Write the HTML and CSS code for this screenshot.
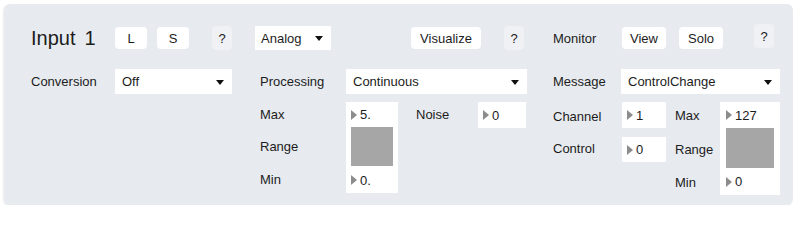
FILE: index.html
```html
<!DOCTYPE html>
<html>
<head>
<meta charset="utf-8">
<link rel="stylesheet" href="styles.css">
</head>
<body>
<div class="panel">
  <div class="col col1">
    <div class="top">
      <div class="title"><span>Input</span><span class="num">1</span></div>
      <div class="btn b-l">L</div>
      <div class="btn b-s">S</div>
      <div class="btn help h1">?</div>
    </div>
    <div class="row2">
      <div class="lbl w84">Conversion</div>
      <div class="dd dd-conv">Off<span class="caret"></span></div>
    </div>
  </div>

  <div class="col col2">
    <div class="top">
      <div class="dd dd-analog">Analog<span class="caret"></span></div>
      <div class="btn b-vis">Visualize</div>
      <div class="btn help h2">?</div>
    </div>
    <div class="row2 ind5">
      <div class="lbl w86">Processing</div>
      <div class="dd dd-proc">Continuous<span class="caret"></span></div>
    </div>
    <div class="lower ind5">
      <div class="labels l-mid">
        <div class="lab la1">Max</div>
        <div class="lab la2">Range</div>
        <div class="lab la3">Min</div>
      </div>
      <div class="range r-mid">
        <div class="nval"><span class="tri"></span>5.</div>
        <div class="sq"></div>
        <div class="nval"><span class="tri"></span>0.</div>
      </div>
      <div class="lab noise-l">Noise</div>
      <div class="nbox noise-b"><span class="tri"></span>0</div>
    </div>
  </div>

  <div class="col col3">
    <div class="top">
      <div class="lbl w69">Monitor</div>
      <div class="btn b-view">View</div>
      <div class="btn b-solo">Solo</div>
      <div class="btn help h3">?</div>
    </div>
    <div class="row2">
      <div class="lbl w68">Message</div>
      <div class="dd dd-msg">ControlChange<span class="caret"></span></div>
    </div>
    <div class="lower">
      <div class="cc-labels">
        <div class="lab cl1">Channel</div>
        <div class="lab cl2">Control</div>
      </div>
      <div class="cc-boxes">
        <div class="nbox cb"><span class="tri"></span>1</div>
        <div class="nbox cb cb2"><span class="tri"></span>0</div>
      </div>
      <div class="labels l-right">
        <div class="lab lb1">Max</div>
        <div class="lab lb2">Range</div>
        <div class="lab lb3">Min</div>
      </div>
      <div class="range r-right">
        <div class="nval"><span class="tri"></span>127</div>
        <div class="sq"></div>
        <div class="nval"><span class="tri"></span>0</div>
      </div>
    </div>
  </div>
</div>
</body>
</html>
```

FILE: styles.css
```css
html, body {
  margin: 0;
  padding: 0;
  background: #ffffff;
}
body {
  font-family: "Liberation Sans", Arial, sans-serif;
  font-size: 13px;
  color: #1c1c1c;
}
.panel {
  margin: 4px 0 0 4px;
  width: 789px;
  height: 201px;
  box-sizing: border-box;
  padding: 22px 13px 0 27px;
  background: #e7ebef;
  border-radius: 6px;
  box-shadow: -1px 1px 2px rgba(0,0,0,0.08);
  display: flex;
}
.col {
  display: flex;
  flex-direction: column;
}
.col1 { width: 201px; margin-right: 23px; }
.col2 { width: 272px; margin-right: 26px; }
.col3 { width: 227px; }

.top {
  height: 24px;
  display: flex;
  align-items: center;
}
.title {
  font-size: 20px;
  width: 84px;
  display: flex;
  align-items: center;
  line-height: 24px;
}
.title .num { margin-left: 9px; }

.btn {
  height: 22px;
  box-sizing: border-box;
  background: #ffffff;
  border-radius: 4px;
  display: flex;
  align-items: center;
  justify-content: center;
  font-size: 13px;
}
.help {
  width: 20px;
  height: 24px;
  background: #eff1f4;
}
.b-l { width: 32px; }
.b-s { width: 32px; margin-left: 10px; }
.h1 { margin-left: 23px; }
.b-vis { width: 70px; margin-left: 80px; }
.h2 { margin-left: 23px; }
.b-view { width: 44px; }
.b-solo { width: 44px; margin-left: 13px; }
.h3 { margin-left: 31px; align-self: flex-start; margin-top: -2px; }

.lbl { flex: none; }
.w84 { width: 84px; }
.w86 { width: 86px; }
.w69 { width: 69px; }
.w68 { width: 68px; }

.row2 {
  margin-top: 19px;
  height: 25px;
  display: flex;
  align-items: center;
}
.ind5 { padding-left: 5px; }

.dd {
  position: relative;
  height: 25px;
  box-sizing: border-box;
  background: #ffffff;
  padding-left: 7px;
  display: flex;
  align-items: center;
  font-size: 13px;
}
.dd-conv { width: 117px; }
.dd-proc { width: 181px; }
.dd-msg { width: 159px; }
.dd-analog { width: 76px; height: 24px; padding-left: 6px; }
.caret {
  position: absolute;
  right: 8px;
  top: 50%;
  margin-top: -2px;
  width: 0;
  height: 0;
  border-left: 4.5px solid transparent;
  border-right: 4.5px solid transparent;
  border-top: 5px solid #111;
}

.lower {
  margin-top: 8px;
  display: flex;
  align-items: flex-start;
}
.labels {
  display: flex;
  flex-direction: column;
}
.lab {
  display: flex;
  align-items: center;
}
.l-mid { width: 86px; }
.la1 { height: 24px; }
.la2 { height: 40px; }
.la3 { height: 27px; }

.range {
  background: #ffffff;
  display: flex;
  flex-direction: column;
  box-sizing: border-box;
}
.r-mid { width: 52px; height: 91px; padding: 0 5px; }
.r-right { width: 60px; height: 93px; padding: 0 6px; }
.nval {
  display: flex;
  align-items: center;
  height: 25px;
}
.r-mid .nval:last-child { height: 26px; }
.r-right .nval:first-child { height: 26px; }
.r-right .nval:last-child { height: 27px; }
.sq {
  background: #a6a6a6;
  flex: none;
}
.r-mid .sq { height: 39px; margin: 0 0 1px 0; }
.r-right .sq { height: 40px; }
.tri {
  display: inline-block;
  width: 0;
  height: 0;
  border-top: 5px solid transparent;
  border-bottom: 5px solid transparent;
  border-left: 6px solid #8c8c8c;
  margin-right: 3px;
}

.noise-l { width: 62px; margin-left: 18px; height: 24px; }
.nbox {
  background: #ffffff;
  height: 26px;
  box-sizing: border-box;
  padding-left: 5px;
  display: flex;
  align-items: center;
}
.noise-b { width: 48px; }

.cc-labels { width: 69px; display: flex; flex-direction: column; }
.cl1 { height: 28px; }
.cl2 { height: 36px; }
.cc-boxes { width: 44px; display: flex; flex-direction: column; }
.cb2 { margin-top: 9px; height: 25px; }
.l-right { width: 45px; margin-left: 9px; }
.lb1 { height: 26px; }
.lb2 { height: 40px; padding-top: 2px; box-sizing: border-box; }
.lb3 { height: 27px; padding-top: 2px; box-sizing: border-box; }
```
